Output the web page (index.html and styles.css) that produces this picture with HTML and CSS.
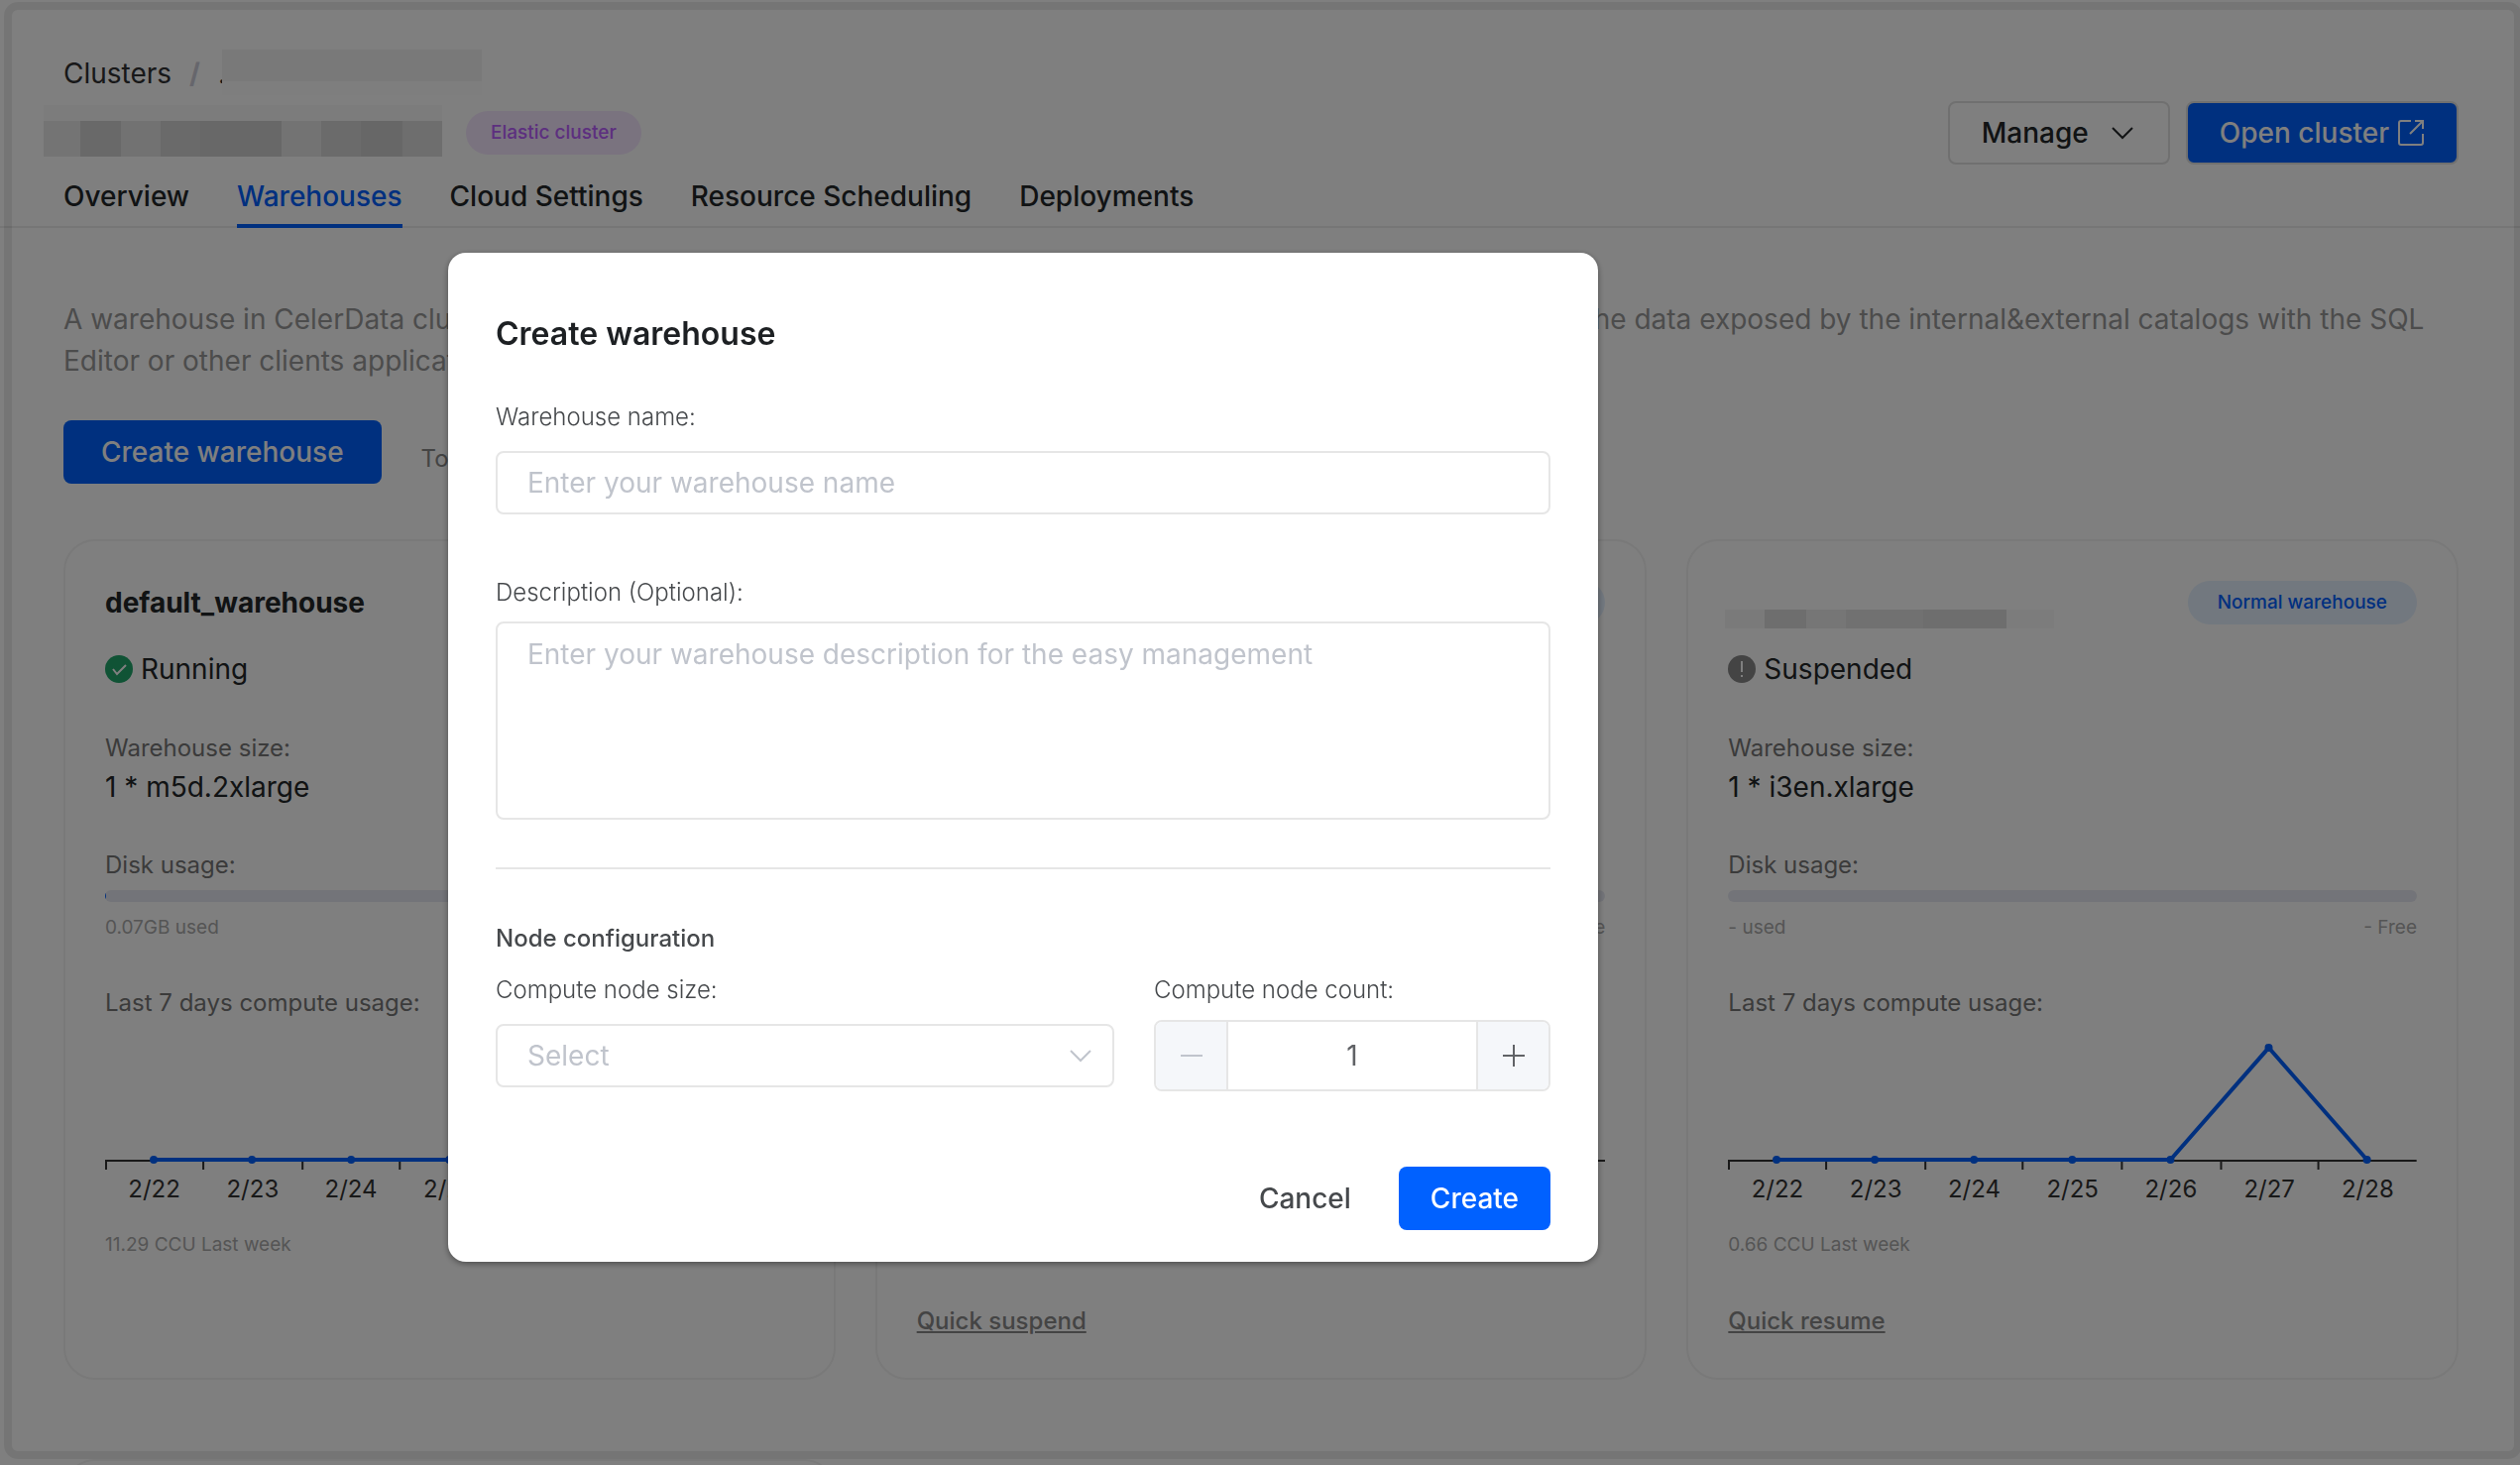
FILE: index.html
```html
<!DOCTYPE html>
<html lang="en">
<head>
<meta charset="utf-8">
<title>Warehouses</title>
<link rel="stylesheet" href="styles.css">
</head>
<body>
<div class="page">
  <header class="header">
    <div class="header-main">
      <div class="header-info">
        <nav class="crumbs" aria-label="Breadcrumb">
          <a href="#">Clusters</a><span class="slash">/</span><span class="dot">.</span><span class="mask mask-crumb"></span>
        </nav>
        <div class="title-row">
          <span class="mask mask-title"></span>
          <span class="tag tag-purple">Elastic cluster</span>
        </div>
      </div>
      <div class="header-actions">
        <button class="btn btn-outline" type="button">Manage
          <svg class="chevron" viewBox="0 0 24 24"><path d="M2 7l10 10L22 7"/></svg>
        </button>
        <button class="btn btn-primary btn-ringed" type="button">Open cluster
          <svg class="external" viewBox="0 0 28 28"><path d="M14 2H4a2 2 0 0 0-2 2v20a2 2 0 0 0 2 2h20a2 2 0 0 0 2-2V15M18 2h8v8M26 2L13 15"/></svg>
        </button>
      </div>
    </div>
    <nav class="tabs" aria-label="Sections">
      <a href="#">Overview</a>
      <a href="#" class="active">Warehouses</a>
      <a href="#">Cloud Settings</a>
      <a href="#">Resource Scheduling</a>
      <a href="#">Deployments</a>
    </nav>
  </header>

  <main class="content">
    <p class="intro">A warehouse in CelerData cluster is a group of compute nodes that run queries. You may use a warehouse to query the data exposed by the internal&amp;external catalogs with the SQL Editor or other clients applications.</p>
    <div class="toolbar">
      <button class="btn btn-primary" type="button">Create warehouse</button>
      <span class="hint">To learn more about warehouses, see the docs.</span>
    </div>
    <div class="cards">
      <section class="card">
        <div class="card-head"><h2>default_warehouse</h2></div>
        <div class="status"><svg class="status-icon ok" viewBox="0 0 28 28"><circle cx="14" cy="14" r="14"/><path d="M8 14l4 5 9-9"/></svg>Running</div>
        <div class="label size-label">Warehouse size:</div>
        <div class="value">1 * m5d.2xlarge</div>
        <div class="label disk-label">Disk usage:</div>
        <div class="bar"><div class="bar-fill"></div></div>
        <div class="legend"><span>0.07GB used</span><span>279.39GB Free</span></div>
        <div class="label usage-label">Last 7 days compute usage:</div>
        <div class="chart">
          <svg class="plot" viewBox="0 0 694 140" preserveAspectRatio="none"><path class="axis" d="M0 125H694M1 125v9M99 125v9M199 125v9M297 125v9M397 125v9M497 125v9M595 125v9"/><path class="line" d="M49 124H644"/><path class="dots" d="M49 124h0M148 124h0M248 124h0M347 124h0M446 124h0M545 124h0M644 124h0"/></svg>
          <div class="days"><span>2/22</span><span>2/23</span><span>2/24</span><span>2/25</span><span>2/26</span><span>2/27</span><span>2/28</span></div>
        </div>
        <div class="total">11.29 CCU Last week</div>
      </section>
      <section class="card">
        <div class="card-head"><h2>query_warehouse</h2><span class="tag tag-blue">Normal warehouse</span></div>
        <div class="status"><svg class="status-icon ok" viewBox="0 0 28 28"><circle cx="14" cy="14" r="14"/><path d="M8 14l4 5 9-9"/></svg>Running</div>
        <div class="label size-label">Warehouse size:</div>
        <div class="value">1 * i3en.xlarge</div>
        <div class="label disk-label">Disk usage:</div>
        <div class="bar"></div>
        <div class="legend"><span>- used</span><span>- Free</span></div>
        <div class="label usage-label">Last 7 days compute usage:</div>
        <div class="chart">
          <svg class="plot" viewBox="0 0 694 140" preserveAspectRatio="none"><path class="axis" d="M0 125H694M1 125v9M99 125v9M199 125v9M297 125v9M397 125v9M497 125v9M595 125v9"/><path class="line" d="M49 124H644"/></svg>
          <div class="days"><span>2/22</span><span>2/23</span><span>2/24</span><span>2/25</span><span>2/26</span><span>2/27</span><span>2/28</span></div>
        </div>
        <div class="total">0 CCU Last week</div>
        <a class="quick" href="#">Quick suspend</a>
      </section>
      <section class="card">
        <div class="card-head"><span class="mask mask-card"></span><span class="tag tag-blue">Normal warehouse</span></div>
        <div class="status"><svg class="status-icon off" viewBox="0 0 28 28"><circle cx="14" cy="14" r="14"/><path d="M14 6v11M14 20v2"/></svg>Suspended</div>
        <div class="label size-label">Warehouse size:</div>
        <div class="value">1 * i3en.xlarge</div>
        <div class="label disk-label">Disk usage:</div>
        <div class="bar"></div>
        <div class="legend"><span>- used</span><span>- Free</span></div>
        <div class="label usage-label">Last 7 days compute usage:</div>
        <div class="chart">
          <svg class="plot" viewBox="0 0 694 140" preserveAspectRatio="none"><path class="axis" d="M0 125H694M1 125v9M99 125v9M199 125v9M297 125v9M397 125v9M497 125v9M595 125v9"/><path class="line" d="M49 124H446L545 11L644 124"/><path class="dots" d="M49 124h0M148 124h0M248 124h0M347 124h0M446 124h0M545 11h0M644 124h0"/></svg>
          <div class="days"><span>2/22</span><span>2/23</span><span>2/24</span><span>2/25</span><span>2/26</span><span>2/27</span><span>2/28</span></div>
        </div>
        <div class="total">0.66 CCU Last week</div>
        <a class="quick" href="#">Quick resume</a>
      </section>
      <section class="card"></section>
    </div>
  </main>
  <div class="frame"></div>
</div>

<div class="overlay">
  <form class="modal" role="dialog" aria-modal="true" aria-labelledby="dialog-title">
    <h1 id="dialog-title">Create warehouse</h1>
    <div class="field">
      <label for="name">Warehouse name:</label>
      <input class="control" id="name" type="text" placeholder="Enter your warehouse name">
    </div>
    <div class="field field-desc">
      <label for="desc">Description (Optional):</label>
      <textarea class="control" id="desc" placeholder="Enter your warehouse description for the easy management"></textarea>
    </div>
    <hr>
    <h3>Node configuration</h3>
    <div class="node-row">
      <div class="field field-size">
        <label for="size">Compute node size:</label>
        <div class="select-wrap">
          <select class="control" id="size"><option>Select</option></select>
          <svg class="chevron" viewBox="0 0 24 24"><path d="M2 7l10 10L22 7"/></svg>
        </div>
      </div>
      <div class="field field-count">
        <label for="count">Compute node count:</label>
        <div class="stepper">
          <button type="button" aria-label="Decrease" disabled><svg viewBox="0 0 24 24"><path d="M1 12h22"/></svg></button>
          <input id="count" type="text" value="1">
          <button type="button" aria-label="Increase"><svg viewBox="0 0 24 24"><path d="M1 12h22M12 1v22"/></svg></button>
        </div>
      </div>
    </div>
    <div class="modal-actions">
      <button class="btn btn-text" type="button">Cancel</button>
      <button class="btn btn-primary" type="submit">Create</button>
    </div>
  </form>
</div>
</body>
</html>
```

FILE: styles.css
```css
* { box-sizing: border-box; }

body {
  margin: 0;
  font-family: Inter, "Liberation Sans", sans-serif;
  font-size: 28px;
  line-height: 42px;
  color: #222628;
  background: #fff;
}

h1, h2, h3, p { margin: 0; }
a { color: inherit; text-decoration: none; }
button, input, textarea, select { font: inherit; color: inherit; margin: 0; }
svg { fill: none; stroke: currentColor; stroke-width: 2; display: block; }

.page { position: relative; height: 100vh; overflow: hidden; }

.frame {
  position: absolute;
  inset: 2px -2px 6px 4px;
  border: 8px solid rgba(0, 0, 0, 0.08);
  border-radius: 14px;
}

/* header */
.header { padding: 52px 62px 0 64px; border-bottom: 2px solid #ececec; }
.header-main { display: flex; justify-content: space-between; }
.crumbs { display: flex; height: 44px; align-items: center; color: #303133; }
.slash { margin: 0 18px; color: #cdcdd8; font-weight: 700; }
.dot { width: 4px; }
.title-row { display: flex; align-items: flex-end; gap: 24px; height: 64px; margin-left: -20px; }
.header-actions { display: flex; gap: 16px; padding-top: 50px; }

.mask { display: block; }
.mask-crumb {
  align-self: flex-end;
  width: 262px;
  height: 46px;
  background: linear-gradient(#f2f2f2 0 32px, #fdfdfd 32px);
}
.mask-title {
  width: 402px;
  height: 52px;
  margin-bottom: 2px;
  background: linear-gradient(90deg, #e8e8e8 0 37px, #d2d2d2 37px 78px, #e4e4e4 78px 118px, #d4d4d4 118px 158px, #d0d0d0 158px 240px, #e6e6e6 240px 280px, #d6d6d6 280px 320px, #cecece 320px 362px, #dcdcdc 362px) bottom / 100% 36px no-repeat #f9f9f9;
}
.mask-card {
  width: 332px;
  height: 19px;
  margin: 29px 0 0 -3px;
  background: linear-gradient(90deg, #f4f4f4 0 40px, #dcdcdc 40px 82px, #ececec 82px 122px, #e2e2e2 122px 200px, #dcdcdc 200px 284px, #f8f8f8 284px);
}

.tag { font-size: 19px; line-height: 44px; border-radius: 22px; font-weight: 500; }
.tag-purple { padding: 0 25px; color: #ba5eff; background: #f4e6ff; margin-bottom: 4px; }
.tag-blue { padding: 0 30px; color: #0060ff; background: #e4f0ff; }

.tabs { display: flex; gap: 48px; margin-top: 10px; font-weight: 500; }
.tabs a { height: 54px; padding-top: 1px; margin-bottom: -2px; border-bottom: 4px solid transparent; }
.tabs .active { color: #0060ff; border-color: #0060ff; }

.btn {
  height: 64px;
  padding: 0 38px;
  border: 0;
  border-radius: 8px;
  background: none;
  font-weight: 500;
  display: flex;
  align-items: center;
}
.btn-primary { background: #0061ff; color: #fff; }
.btn-outline { border: 2px solid #e0e0e0; padding: 0 34px 0 32px; gap: 22px; }
.btn-ringed { border: 2px solid #e0e0e0; padding: 0 32px; gap: 8px; }
.chevron { width: 24px; height: 24px; }
.external { width: 28px; height: 28px; }

/* warehouses */
.content { padding: 70px 62px 0 64px; }
.intro { color: #999; padding-top: 1px; }
.toolbar { display: flex; gap: 40px; margin-top: 39px; }
.hint { font-size: 24px; line-height: 36px; padding-top: 21px; color: #888; }
.cards { display: grid; grid-template-columns: repeat(3, 1fr); gap: 80px 40px; margin-top: 56px; }
.card { border: 2px solid #f2f2f2; border-radius: 32px; padding: 40px; height: 848px; }
.card-head { display: flex; justify-content: space-between; height: 44px; align-items: flex-start; }
.card h2 { font-size: 28px; line-height: 44px; font-weight: 700; }
.status { display: flex; align-items: center; gap: 8px; margin-top: 24px; }
.status-icon { width: 28px; height: 28px; stroke: #fff; }
.status-icon circle { stroke: none; }
.ok { fill: #20a66a; }
.ok path { fill: none; }
.off { fill: #888; }
.label { font-size: 24px; line-height: 36px; color: #777; }
.size-label { margin-top: 41px; }
.disk-label { margin-top: 40px; }
.usage-label { margin-top: 43px; }
.bar { height: 12px; margin-top: 7px; border-radius: 6px; background: #e6e8f2; overflow: hidden; }
.bar-fill { width: 1px; height: 12px; background: #0060ff; }
.legend { display: flex; justify-content: space-between; margin-top: 11px; }
.legend, .total { font-size: 19px; line-height: 30px; color: #aaa; }
.chart { margin-top: 16px; }
.plot { width: 100%; height: 140px; }
.axis { stroke: #333; }
.line { stroke: #0060ff; stroke-width: 4; }
.dots { stroke: #0060ff; stroke-width: 8; stroke-linecap: round; }
.days { display: grid; grid-template-columns: repeat(7, 1fr); text-align: center; font-size: 24px; line-height: 28px; color: #333; }
.total { margin-top: 27px; }
.quick { display: inline-block; margin-top: 44px; font-size: 24px; line-height: 36px; font-weight: 500; color: #888; text-decoration: underline; }

/* dialog */
.overlay {
  position: fixed;
  inset: 0;
  padding-top: 255px;
  padding-left: 452px;
  background: rgba(0, 0, 0, 0.5);
}
.modal {
  width: 1160px;
  padding: 58px 48px 32px;
  border-radius: 18px;
  background: #fff;
  box-shadow: 0 2px 6px rgba(0, 0, 0, 0.4);
  color: #46494c;
}
.modal h1 { font-size: 32px; line-height: 48px; font-weight: 600; color: #1d2023; }
.modal h3 { font-size: 24px; line-height: 36px; font-weight: 500; }
.field { display: flex; flex-direction: column; gap: 16px; margin-top: 42px; }
.field label { font-size: 24px; line-height: 36px; font-weight: 300; }
.field-desc { margin-top: 61px; gap: 11px; }
.control {
  width: 100%;
  height: 64px;
  padding: 0 30px;
  border: 2px solid #e6e6e6;
  border-radius: 8px;
  background: #fff;
}
textarea.control { height: 200px; padding: 10px 30px; resize: none; display: block; }
::placeholder { color: #c0c4cc; opacity: 1; }
.modal hr { height: 2px; border: 0; margin: 48px 0 52px; background: #e6e6e6; }
.node-row { display: flex; gap: 40px; margin-top: 16px; }
.node-row .field { margin-top: 0; }
.field-size { flex: 1; gap: 16px; }
.field-count { width: 400px; gap: 12px; }
.select-wrap { display: grid; align-items: center; }
.select-wrap > * { grid-area: 1 / 1; }
.select-wrap select { appearance: none; color: #c0c4cc; }
.select-wrap svg { justify-self: end; margin-right: 22px; color: #c0c4cc; pointer-events: none; }
.stepper { display: flex; height: 72px; border: 2px solid #e6e6e6; border-radius: 8px; overflow: hidden; }
.stepper input { flex: 1; min-width: 0; border: solid #e6e6e6; border-width: 0 2px; text-align: center; color: #606266; padding: 0; }
.stepper button { width: 71px; border: 0; padding: 0; display: grid; place-items: center; background: #f5f7fa; color: #606266; }
.stepper button:disabled { color: #c0c4cc; }
.stepper svg { width: 24px; height: 24px; }
.modal-actions { display: flex; justify-content: flex-end; gap: 16px; margin-top: 76px; }
.modal-actions .btn { padding: 0 32px; }
```
